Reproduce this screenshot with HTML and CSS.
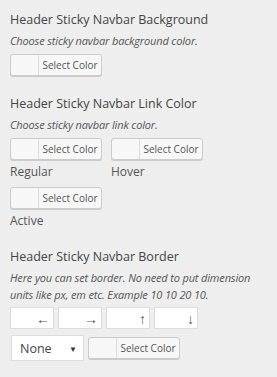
FILE: index.html
```html
<!DOCTYPE html>
<html lang="en">

<head>
    <meta charset="UTF-8">
    <title>Sticky Navbar Options</title>
    <link rel="stylesheet" href="styles.css">
</head>

<body>

    <!-- Background -->
    <div class="option">
        <h3 class="option-title">Header Sticky Navbar Background</h3>
        <p class="option-desc">Choose sticky navbar background color.</p>
        <button class="color-button" type="button"><span class="swatch"></span><span class="label">Select Color</span></button>
    </div>

    <!-- Link color -->
    <div class="option">
        <h3 class="option-title">Header Sticky Navbar Link Color</h3>
        <p class="option-desc">Choose sticky navbar link color.</p>
        <div class="color-grid">
            <div class="color-item">
                <button class="color-button" type="button"><span class="swatch"></span><span class="label">Select Color</span></button>
                <div class="color-caption">Regular</div>
            </div>
            <div class="color-item">
                <button class="color-button" type="button"><span class="swatch"></span><span class="label">Select Color</span></button>
                <div class="color-caption">Hover</div>
            </div>
            <div class="color-item">
                <button class="color-button" type="button"><span class="swatch"></span><span class="label">Select Color</span></button>
                <div class="color-caption">Active</div>
            </div>
        </div>
    </div>

    <!-- Border -->
    <div class="option">
        <h3 class="option-title">Header Sticky Navbar Border</h3>
        <p class="option-desc">Here you can set border. No need to put dimension units like px, em etc. Example 10 10 20 10.</p>
        <div class="dimension-row">
            <div class="dimension"><span>&larr;</span></div>
            <div class="dimension"><span>&rarr;</span></div>
            <div class="dimension"><span>&uarr;</span></div>
            <div class="dimension"><span>&darr;</span></div>
        </div>
        <div class="border-row">
            <div class="style-select">None<span class="caret">&#9660;</span></div>
            <button class="color-button" type="button"><span class="swatch"></span><span class="label">Select Color</span></button>
        </div>
    </div>

</body>

</html>
```

FILE: styles.css
```css
/* Page */
body {
    margin: 0;
    padding: 11px 10px 0 10px;
    background-color: #eeeeee;
    font-family: "Open Sans", "Noto Sans", sans-serif;
    color: #444;
}

/* Option block */
.option {
    margin-bottom: 19px;
}

.option-title {
    margin: 0;
    font-size: 12.5px;
    font-weight: normal;
    line-height: 18px;
    color: #444;
}

.option-desc {
    margin: 3px 0 5px 0;
    font-size: 11px;
    letter-spacing: -0.15px;
    font-style: italic;
    line-height: 17px;
    color: #555;
}

/* Color picker button */
.color-button {
    display: flex;
    width: 92px;
    height: 22px;
    padding: 0;
    border: 1px solid #cccccc;
    border-radius: 3px;
    background-color: #f7f7f7;
    box-shadow: 0 1px 0 #cccccc;
    font-family: inherit;
    cursor: pointer;
}

.color-button .swatch {
    width: 27px;
    height: 100%;
    border-right: 1px solid #dddddd;
    border-radius: 3px 0 0 3px;
}

.color-button .label {
    flex: 1;
    font-size: 10px;
    line-height: 20px;
    color: #555;
    text-align: center;
}

/* Link color grid */
.color-grid {
    display: grid;
    grid-template-columns: 92px 92px;
    column-gap: 9px;
    row-gap: 7px;
}

.color-caption {
    margin-top: 4px;
    font-size: 12px;
    line-height: 16px;
    color: #555;
}

/* Border dimensions */
.dimension-row {
    display: flex;
    gap: 4px;
    margin-top: -1px;
}

.dimension {
    width: 44px;
    height: 22px;
    box-sizing: border-box;
    border: 1px solid #dddddd;
    background-color: #fff;
    display: flex;
    align-items: center;
    justify-content: flex-end;
    padding-right: 3px;
    font-size: 14px;
    color: #555;
}

.border-row {
    display: flex;
    align-items: flex-start;
    gap: 4px;
    margin-top: 6px;
}

.style-select {
    width: 73px;
    height: 26px;
    box-sizing: border-box;
    margin-left: 1px;
    border: 1px solid #dddddd;
    background-color: #fff;
    display: flex;
    align-items: center;
    justify-content: space-between;
    padding: 0 6px 0 8px;
    font-size: 12.5px;
    color: #444;
}

.style-select .caret {
    font-size: 8px;
    color: #333;
}

.border-row .color-button {
    margin-top: 2px;
}
```
